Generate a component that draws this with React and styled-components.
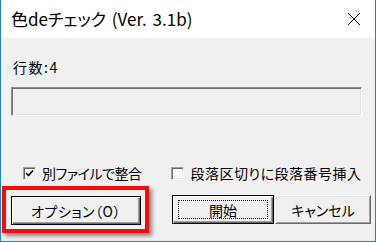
import React from 'react'
import styled, { createGlobalStyle } from 'styled-components'

const GlobalStyle = createGlobalStyle`
  html, body {
    margin: 0;
    padding: 0;
    background: #ffffff;
  }
  * {
    box-sizing: border-box;
  }
`

const Window = styled.div`
  width: 376px;
  height: 242px;
  display: flex;
  flex-direction: column;
  background: #f0f0f0;
  border: 1px solid #1883d7;
  border-top: none;
  font-family: "Noto Sans CJK JP", "Noto Sans", sans-serif;
  font-feature-settings: "palt";
  color: #000;
  overflow: hidden;
`

const TitleBar = styled.div`
  height: 38px;
  flex: none;
  background: #ffffff;
  display: flex;
  align-items: center;
  justify-content: space-between;
  padding: 0 14px 0 10px;
`

const Title = styled.div`
  font-size: 17px;
  line-height: 22px;
  margin-top: -1px;
  word-spacing: 2px;
`

const CloseButton = styled.div`
  width: 14px;
  height: 14px;
  display: flex;
  align-items: center;
  justify-content: center;
`

const Label = styled.div`
  margin: 21px 0 0 12px;
  font-size: 14px;
  line-height: 17px;
  letter-spacing: 1.5px;
`

const Progress = styled.div`
  margin: 11px 0 0 10px;
  width: 351px;
  height: 29px;
  border: 1px solid;
  border-color: #8c8c8c #ffffff #ffffff #8c8c8c;
  box-shadow: inset 1px 1px #6e6e6e, inset -1px -1px #e3e3e3;
  background: #f0f0f0;
`

const CheckRow = styled.div`
  margin-top: 47px;
  height: 20px;
  display: flex;
  align-items: center;
  padding-left: 22px;
`

const CheckItem = styled.label`
  display: flex;
  align-items: center;
  gap: 6px;
  margin-right: ${p => p.$gap || 0}px;
  font-size: 14px;
  line-height: 18px;
  letter-spacing: ${p => p.$spacing || 0}px;
`

const Box = styled.span`
  width: 13px;
  height: 13px;
  flex: none;
  background: #ffffff;
  border: 1px solid;
  border-color: #a0a0a0 #ffffff #ffffff #a0a0a0;
  box-shadow: inset 1px 1px #696969, inset -1px -1px #e3e3e3;
  display: flex;
  align-items: center;
  justify-content: center;
`

const ButtonRow = styled.div`
  margin-top: 3px;
  display: flex;
  align-items: center;
  padding-left: 1px;
`

const Highlight = styled.div`
  border: 4px solid #f20d0d;
  padding: 6px 4px 4px 5px;
  box-shadow: 3px 3px 4px rgba(0, 0, 0, 0.45);
  margin-right: 23px;
`

const Button = styled.div`
  position: relative;
  width: ${p => p.$w}px;
  height: 29px;
  display: flex;
  align-items: center;
  justify-content: center;
  background: #f0f0f0;
  border: 1px solid;
  border-color: ${p => (p.$outlined ? '#000000' : '#ffffff #696969 #696969 #ffffff')};
  box-shadow: ${p =>
    p.$outlined
      ? 'inset 1px 1px #ffffff, inset -1px -1px #696969, inset -2px -2px #a0a0a0'
      : 'inset 1px 1px #e3e3e3, inset -1px -1px #a0a0a0'};
  font-size: 14px;
  line-height: 18px;
  letter-spacing: ${p => p.$spacing || 0}px;
  margin-right: ${p => p.$gap || 0}px;

  &::after {
    content: '';
    display: ${p => (p.$focused ? 'block' : 'none')};
    position: absolute;
    inset: 4px 5px 4px 5px;
    border: 1px dotted #000000;
  }
`

function App() {
  return (
    <>
      <GlobalStyle />
      <Window>
        <TitleBar>
          <Title>色deチェック (Ver. 3.1b)</Title>
          <CloseButton>
            <svg width="14" height="14" viewBox="0 0 14 14">
              <path d="M1 1 L13 13 M13 1 L1 13" stroke="#000" strokeWidth="1" fill="none" />
            </svg>
          </CloseButton>
        </TitleBar>
        <Label>行数:4</Label>
        <Progress />
        <CheckRow>
          <CheckItem $gap={30} $spacing={-0.5}>
            <Box>
              <svg width="9" height="9" viewBox="0 0 9 9">
                <path d="M1 4 L3.5 6.5 L8 1.5" stroke="#000" strokeWidth="1.6" fill="none" />
              </svg>
            </Box>
            別ファイルで整合
          </CheckItem>
          <CheckItem $spacing={0.5}>
            <Box />
            段落区切りに段落番号挿入
          </CheckItem>
        </CheckRow>
        <ButtonRow>
          <Highlight>
            <Button $w={130} $outlined $spacing={0.5}>オプション（O）</Button>
          </Highlight>
          <Button $w={102} $outlined $focused $gap={1}>開始</Button>
          <Button $w={96}>キャンセル</Button>
        </ButtonRow>
      </Window>
    </>
  )
}

export default App
